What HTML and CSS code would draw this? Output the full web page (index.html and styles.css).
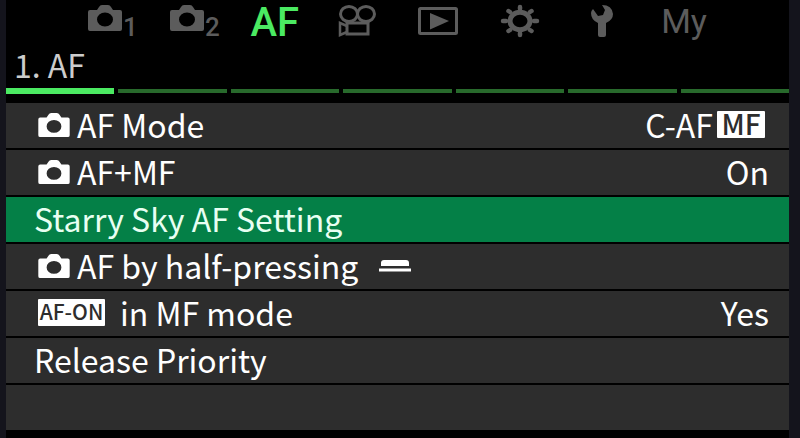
FILE: index.html
```html
<!DOCTYPE html>
<html lang="en">
<head>
    <meta charset="UTF-8">
    <meta name="viewport" content="width=device-width, initial-scale=1.0">
    <title>Camera Menu - AF</title>
    <link rel="stylesheet" href="styles.css">
</head>
<body>
    <!-- Shared icon shapes -->
    <svg class="symbols" aria-hidden="true">
        <symbol id="camera" viewBox="0 0 34 26">
            <path fill="currentColor" fill-rule="evenodd" d="M2 5H9L11 2Q12 0 14 0H20Q22 0 23 2L25 5H32Q34 5 34 7V24Q34 26 32 26H2Q0 26 0 24V7Q0 5 2 5ZM17 7.500A8 7 0 1 0 17 21.500A8 7 0 1 0 17 7.500Z"/>
        </symbol>
    </svg>

    <main class="screen">
        <!-- Menu tabs -->
        <nav class="tabs">
            <button class="tab numbered" aria-label="Shooting 1"><svg class="tab-camera"><use href="#camera"/></svg><span class="tab-number">1</span></button>
            <button class="tab numbered" aria-label="Shooting 2"><svg class="tab-camera"><use href="#camera"/></svg><span class="tab-number">2</span></button>
            <button class="tab active">AF</button>
            <button class="tab" aria-label="Video">
                <svg width="40" height="32" viewBox="0 0 40 32" fill="none" stroke="currentColor" stroke-width="3">
                    <ellipse cx="12" cy="9" rx="8.500" ry="7.500"/>
                    <ellipse cx="29" cy="9" rx="8.500" ry="7.500"/>
                    <path d="M10 18H31V29H10Z"/>
                    <path stroke-width="2.500" d="M10 21L3 18V30L10 27"/>
                </svg>
            </button>
            <button class="tab" aria-label="Playback">
                <svg width="40" height="28" viewBox="0 0 40 28">
                    <rect x="1.500" y="1.500" width="37" height="25" rx="1" fill="none" stroke="currentColor" stroke-width="3"/>
                    <path fill="currentColor" d="M12 6L31 14L12 22.500Z"/>
                </svg>
            </button>
            <button class="tab" aria-label="Settings">
                <svg width="40" height="34" viewBox="0 0 40 34">
                    <ellipse cx="20" cy="17" rx="10" ry="8.700" fill="none" stroke="currentColor" stroke-width="5"/>
                    <path fill="none" stroke="currentColor" stroke-width="4.500" stroke-linecap="round" d="M20 5V3M20 29V31M6 17H3M34 17H37M10 8L8.500 7M30 8L31.500 7M10 26L8.500 27M30 26L31.500 27"/>
                </svg>
            </button>
            <button class="tab" aria-label="Setup">
                <svg width="24" height="34" viewBox="0 0 24 34">
                    <path fill="currentColor" d="M12 1Q22 1 23 10Q23 16 16 19V31Q16 33 14 33H10Q8 33 8 31V19Q1 16 1 9Q1 7 3 5L8 12L13 11L15 6Z"/>
                </svg>
            </button>
            <button class="tab">My</button>
        </nav>

        <h1 class="page-title">1. AF</h1>

        <!-- Page indicator -->
        <div class="pages">
            <span class="page current"></span>
            <span class="page"></span>
            <span class="page"></span>
            <span class="page"></span>
            <span class="page"></span>
            <span class="page"></span>
            <span class="page"></span>
        </div>

        <!-- Menu items -->
        <div class="menu">
            <button class="row with-icon">
                <svg class="row-camera"><use href="#camera"/></svg>
                <span class="label">AF Mode</span>
                <span class="value">C-AF<span class="badge mf">MF</span></span>
            </button>
            <button class="row with-icon">
                <svg class="row-camera"><use href="#camera"/></svg>
                <span class="label">AF+MF</span>
                <span class="value">On</span>
            </button>
            <button class="row selected">
                <span class="label">Starry Sky AF Setting</span>
            </button>
            <button class="row with-icon">
                <svg class="row-camera"><use href="#camera"/></svg>
                <span class="label">AF by half-pressing</span>
                <svg class="shutter" width="32" height="12" viewBox="0 0 32 12">
                    <path fill="currentColor" d="M2 6V3Q2 0 5 0H27Q30 0 30 3V6ZM0 8.500H32V11.500H0Z"/>
                </svg>
            </button>
            <button class="row with-icon">
                <span class="badge af-on">AF-ON</span>
                <span class="label after-badge">in MF mode</span>
                <span class="value">Yes</span>
            </button>
            <button class="row">
                <span class="label">Release Priority</span>
            </button>
            <div class="row"></div>
        </div>
    </main>
</body>
</html>
```

FILE: styles.css
```css
* {
    box-sizing: border-box;
}
body {
    margin: 0;
    padding: 0 11px 0 6px;
    background-color: #14141c;
    color: #fff;
    font-family: "Noto Sans CJK JP", sans-serif;
}
button {
    border: none;
    background: none;
    padding: 0;
    color: inherit;
    font-family: inherit;
    cursor: pointer;
}
.symbols {
    position: absolute;
    width: 0;
    height: 0;
}
.screen {
    min-height: 100vh;
    background-color: #000;
}

/* Tabs */
.tabs {
    display: grid;
    grid-template-columns: repeat(8, 1fr);
    height: 44px;
    padding: 0 64px;
}
.tab {
    display: flex;
    align-items: center;
    justify-content: center;
    padding-bottom: 2px;
    color: #5c5c5c;
    font-family: Roboto, sans-serif;
    font-size: 34px;
    line-height: 42px;
}
.tab.active {
    padding: 2px 0 0;
    color: #4bea62;
    font-size: 40px;
    font-weight: 500;
}
.tab.numbered {
    padding-left: 4px;
}
.tab-camera {
    width: 34px;
    height: 26px;
    margin-bottom: 6px;
}
.tab-number {
    align-self: flex-end;
    margin-left: 1px;
    font-size: 26px;
    font-weight: 500;
    line-height: 30px;
}

.page-title {
    margin: 0;
    padding: 0 8px;
    height: 44px;
    color: #ccc;
    font-size: 32px;
    font-weight: 400;
    line-height: 40px;
}

/* Page indicator */
.pages {
    display: flex;
    align-items: center;
    gap: 4px;
    height: 6px;
}
.page {
    flex: 1;
    height: 4px;
    background-color: #286a2c;
}
.page.current {
    height: 6px;
    background-color: #4bea62;
}

/* Menu */
.menu {
    display: flex;
    flex-direction: column;
    gap: 2px;
    padding-top: 9px;
}
.row {
    display: flex;
    align-items: center;
    width: 100%;
    height: 45px;
    padding: 0 20px 2px 28px;
    background-color: #2d2d2d;
    font-size: 32px;
    line-height: 43px;
    text-align: left;
    white-space: pre;
}
.row.with-icon {
    padding-left: 32px;
}
.row.selected {
    background-color: #048047;
    color: #e8fff2;
}
.row-camera {
    width: 32px;
    height: 24px;
    margin-right: 7px;
}
.value {
    display: flex;
    align-items: center;
    margin-left: auto;
}
.badge {
    height: 27px;
    border-radius: 1px;
    background-color: #fff;
    color: #2d2d2d;
    font-weight: 500;
    line-height: 25px;
    text-align: center;
}
.badge.mf {
    width: 48px;
    margin: 0 4px;
    font-size: 28px;
}
.badge.af-on {
    width: 67px;
    font-size: 21px;
}
.after-badge {
    margin-left: 15px;
}
.shutter {
    margin-left: 21px;
}
```
